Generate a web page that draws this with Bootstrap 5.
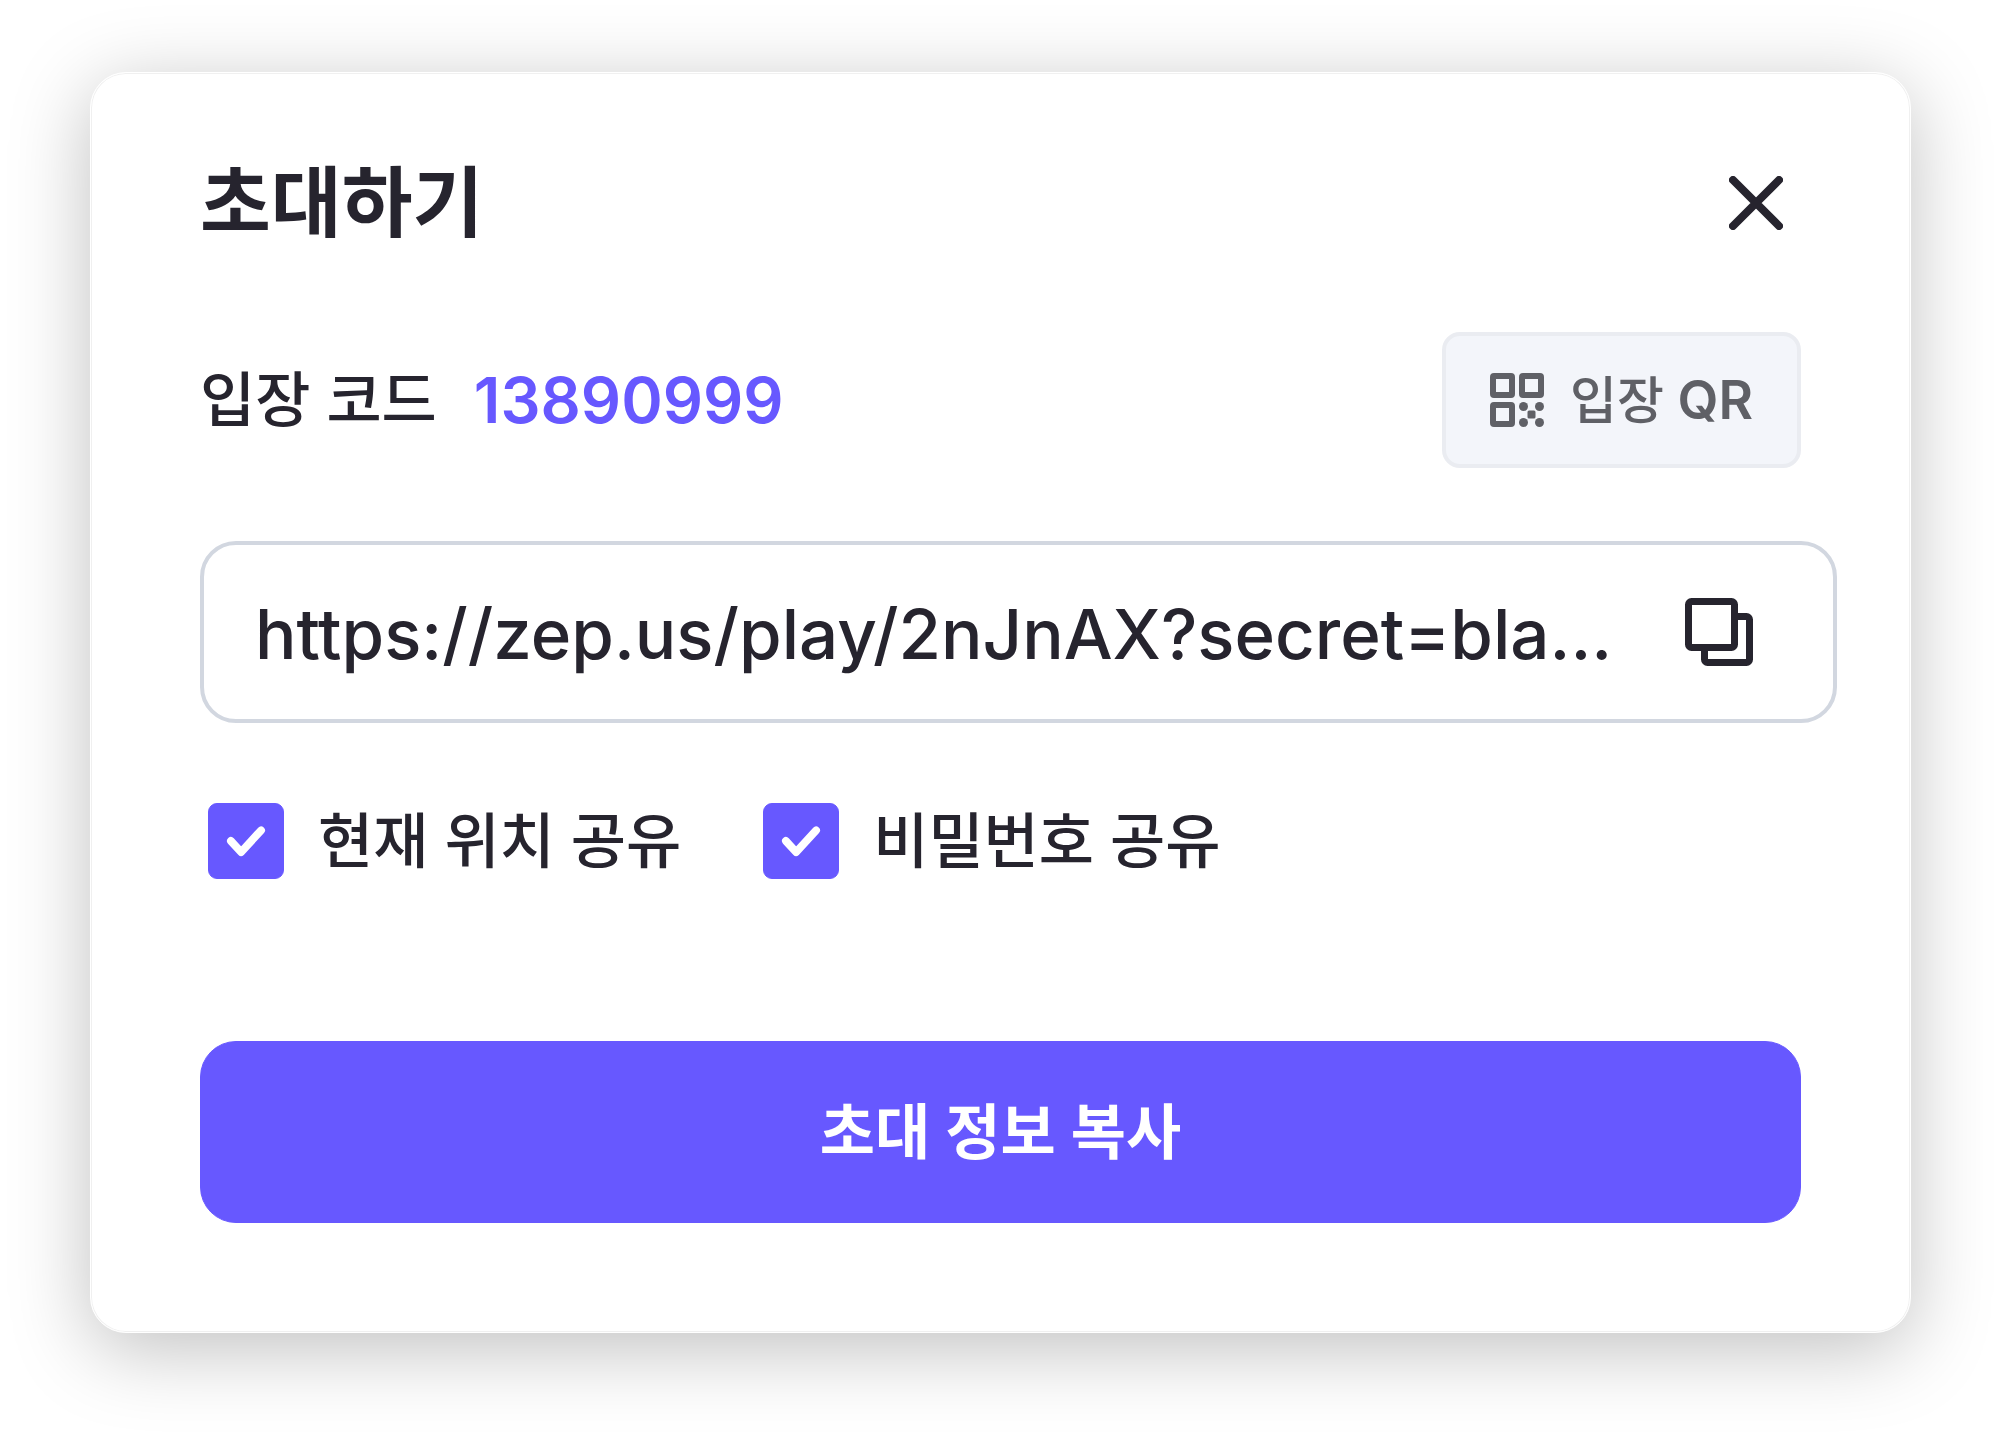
<!DOCTYPE html>
<html lang="ko">
<head>
<meta charset="utf-8">
<meta name="viewport" content="width=device-width, initial-scale=1">
<title>초대하기</title>
<link rel="stylesheet" href="https://cdn.jsdelivr.net/npm/bootstrap@5.3.0/dist/css/bootstrap.min.css">
<style>
  :root { --ink: #26242e; --brand: #6758ff; }
  body { background: #fff; color: var(--ink); font-family: Inter, "Noto Sans CJK KR", sans-serif; font-size: 60px; font-weight: 500; line-height: 78px; }
  .stage { padding: 72px 89px 106px 90px; }
  .invite { --bs-card-border-color: #fff; --bs-card-border-radius: 36px; --bs-card-bg: #fff; color: var(--ink); padding: 85px 109px 109px; box-shadow: inset 0 0 0 1px #f0f0f0, 0 16px 80px rgba(0, 0, 0, .25); }
  .invite-title { font-size: 77px; line-height: 90px; font-weight: 700; }
  .icon-btn { --bs-btn-padding-x: 0; --bs-btn-padding-y: 0; --bs-btn-color: var(--ink); line-height: 0; }
  .close-btn { width: 90px; height: 90px; }
  .code-row { margin-top: 84px; }
  .code-value { color: var(--brand); font-size: 63px; font-weight: 600; margin-left: 37px; }
  .qr-btn { --bs-btn-color: #5f6066; --bs-btn-bg: #f3f5fa; --bs-btn-border-color: #eaecf1; --bs-btn-border-width: 4px; --bs-btn-border-radius: 18px; --bs-btn-padding-x: 44px; --bs-btn-font-size: 51px; --bs-btn-font-weight: 500; --bs-btn-line-height: 78px; height: 136px; gap: 26px; }
  .qr-latin { font-size: 53px; font-weight: 600; }
  .link-box { margin: 73px -36px 0 0; height: 182px; border: 4px solid #d2d7e0; border-radius: 36px; padding: 0 80px 0 51px; }
  .link-text { color: var(--ink); font-size: 69px; line-height: 90px; font-weight: 500; outline: 0; text-overflow: ellipsis; padding: 4px 0 0; }
  .options { margin: 79px 0 161px 8px; gap: 82px; }
  .option { gap: 34px; }
  .option .form-check-input { width: 76px; height: 76px; border-radius: 9px; }
  .option .form-check-input:checked { background-color: var(--brand); border-color: var(--brand); background-size: 100%; background-image: url("data:image/svg+xml,%3Csvg xmlns='http://www.w3.org/2000/svg' viewBox='0 0 76 76'%3E%3Cpath d='M22.5 38 33 49.500 53.500 27' fill='none' stroke='%23fff' stroke-width='8' stroke-linecap='round' stroke-linejoin='round'/%3E%3C/svg%3E"); }
  .copy-all { --bs-btn-color: #fff; --bs-btn-bg: var(--brand); --bs-btn-border-color: var(--brand); --bs-btn-hover-color: #fff; --bs-btn-hover-bg: #5647ee; --bs-btn-border-radius: 36px; --bs-btn-font-size: 60px; --bs-btn-font-weight: 600; --bs-btn-line-height: 78px; height: 182px; }
</style>
<script defer src="https://cdn.jsdelivr.net/npm/bootstrap@5.3.0/dist/js/bootstrap.bundle.min.js"></script>
</head>
<body>
<main class="stage">
  <section class="card invite" aria-labelledby="inviteTitle">
    <header class="d-flex align-items-center justify-content-between">
      <h1 class="invite-title mb-0" id="inviteTitle">초대하기</h1>
      <button type="button" class="btn icon-btn close-btn border-0" aria-label="닫기">
        <svg width="54" height="54" viewBox="0 0 54 54" fill="none" stroke="currentColor" stroke-width="8" stroke-linecap="round"><path d="M4 4 50 50M50 4 4 50"/></svg>
      </button>
    </header>

    <div class="code-row d-flex align-items-center justify-content-between">
      <div class="d-flex align-items-center">
        <span>입장 코드</span>
        <strong class="code-value">13890999</strong>
      </div>
      <button type="button" class="btn qr-btn d-flex align-items-center">
        <svg width="54" height="54" viewBox="0 0 54 54" fill="none" stroke="currentColor" stroke-width="6" aria-hidden="true">
          <rect x="3" y="3" width="19" height="19" rx="1"/><rect x="32" y="3" width="19" height="19" rx="1"/><rect x="3" y="32" width="19" height="19" rx="1"/>
          <g fill="currentColor" stroke="none"><circle cx="33.500" cy="33.500" r="4.500"/><circle cx="49.500" cy="33.500" r="4.500"/><circle cx="33.500" cy="49.500" r="4.500"/><circle cx="49.500" cy="49.500" r="4.500"/><rect x="37.500" y="37.500" width="8" height="8" rx="1.500"/></g>
        </svg>
        <span>입장 <span class="qr-latin">QR</span></span>
      </button>
    </div>

    <div class="link-box d-flex align-items-center justify-content-between">
      <input type="text" class="link-text form-control-plaintext" aria-label="초대 링크" value="https://zep.us/play/2nJnAX?secret=bla..." readonly>
      <button type="button" class="btn icon-btn border-0 flex-shrink-0" aria-label="링크 복사">
        <svg width="68" height="68" viewBox="0 0 68 68" fill="none" stroke="currentColor" stroke-width="7" stroke-linejoin="round"><rect x="3.500" y="3.500" width="46" height="46" rx="3"/><path d="M49 18.500h12.500a3 3 0 0 1 3 3v40a3 3 0 0 1-3 3h-39a3 3 0 0 1-3-3V49"/></svg>
      </button>
    </div>

    <div class="options d-flex flex-wrap">
      <div class="option d-flex align-items-center">
        <input class="form-check-input m-0 flex-shrink-0" type="checkbox" id="sharePlace" checked>
        <label for="sharePlace">현재 위치 공유</label>
      </div>
      <div class="option d-flex align-items-center">
        <input class="form-check-input m-0 flex-shrink-0" type="checkbox" id="sharePassword" checked>
        <label for="sharePassword">비밀번호 공유</label>
      </div>
    </div>

    <button type="button" class="btn copy-all w-100">초대 정보 복사</button>
  </section>
</main>
</body>
</html>
